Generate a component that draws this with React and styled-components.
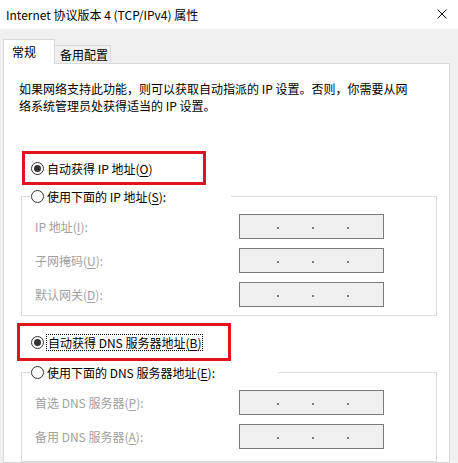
import React from "react";
import styled, { createGlobalStyle } from "styled-components";

const Global = createGlobalStyle`
  html, body { margin: 0; padding: 0; background: #f0f0f0; }
  body {
    width: 458px; height: 463px; overflow: hidden;
    font-family: "Noto Sans CJK SC", "Noto Sans", sans-serif;
    font-size: 12px; color: #000;
  }
  * { box-sizing: border-box; }
`;

const Window = styled.div`
  width: 458px;
  height: 463px;
  display: flex;
  flex-direction: column;
  background: #f0f0f0;
  overflow: hidden;
`;

const TitleBar = styled.div`
  height: 29px;
  flex: none;
  background: #fff;
  display: flex;
  align-items: center;
  justify-content: space-between;
  padding: 0 11px 1px 6px;
  font-size: 12px;
  line-height: 17px;
  color: #000;
`;

const Body = styled.div`
  flex: 1;
  display: flex;
  flex-direction: column;
  padding: 10px 0 0 3px;
`;

const TabRow = styled.div`
  display: flex;
  align-items: flex-end;
`;

const Tab = styled.div`
  position: relative;
  line-height: 17px;
  border: 1px solid #d9d9d9;
  border-bottom: none;
  white-space: nowrap;
  ${(p) =>
    p.$active
      ? `
    z-index: 1;
    width: 52px;
    height: 25px;
    margin-bottom: -1px;
    padding: 3px 0 0 8px;
    background: #fff;
  `
      : `
    width: 57px;
    height: 18px;
    margin-left: -1px;
    padding: 0 0 0 5px;
    background: #f0f0f0;
  `}
`;

const Panel = styled.div`
  width: 447px;
  flex: 1;
  background: #fff;
  border: 1px solid #d9d9d9;
  display: flex;
  flex-direction: column;
  align-items: flex-start;
  padding-top: 16px;
`;

const Description = styled.p`
  margin: 0 0 0 15px;
  line-height: 17px;
  color: #000;
`;

const Highlight = styled.div`
  margin-left: ${(p) => p.$ml}px;
  margin-top: ${(p) => p.$mt}px;
  width: ${(p) => p.$w}px;
  height: ${(p) => p.$h}px;
  border: 3px solid #e0141c;
  display: flex;
  align-items: center;
  padding-left: ${(p) => 31 - p.$ml - 4 - 3}px;
`;

const RadioLabel = styled.span`
  display: inline-flex;
  align-items: center;
  line-height: 17px;
  white-space: nowrap;
  color: #000;
`;

const RadioCircle = styled.span`
  width: 13px;
  height: 13px;
  flex: none;
  border-radius: 50%;
  border: 1px solid #333;
  background: #fff;
  margin-right: 3px;
  display: flex;
  align-items: center;
  justify-content: center;
  &::after {
    content: "";
    display: ${(p) => (p.$checked ? "block" : "none")};
    width: 7px;
    height: 7px;
    border-radius: 50%;
    background: #333;
  }
`;

const Focus = styled.span`
  outline: 1px dotted #000;
  outline-offset: 0;
  padding: 0 1px 0 1px;
  line-height: 15px;
`;

const Group = styled.fieldset`
  margin: 3px 0 0 17px;
  width: 416px;
  min-width: 0;
  border: 1px solid #dcdcdc;
  padding: 9px 0 ${(p) => p.$pb}px 0;
`;

const Legend = styled.legend`
  margin-left: 8px;
  padding: 0 0 0 1px;
  width: ${(p) => p.$w}px;
  height: 17px;
  line-height: 17px;
  background: #fff;
  display: flex;
  align-items: center;
`;

const Rows = styled.div`
  display: grid;
  grid-template-columns: 204px 145px;
  grid-auto-rows: 25px;
  row-gap: 9px;
  padding-left: 13px;
`;

const FieldLabel = styled.span`
  display: flex;
  align-items: center;
  color: #a0a0a0;
  line-height: 17px;
  white-space: nowrap;
`;

const IpBox = styled.div`
  border: 1px solid #7a7a7a;
  background: #f0f0f0;
  display: flex;
  align-items: center;
  gap: 33px;
  padding: 3px 0 0 37px;
`;

const Dot = styled.span`
  width: 2px;
  height: 2px;
  background: #7d7d7d;
  flex: none;
`;

const U = styled.span`
  text-decoration: underline;
  text-underline-offset: 2px;
`;

function Radio({ checked, children }) {
  return (
    <RadioLabel>
      <RadioCircle $checked={checked} />
      {children}
    </RadioLabel>
  );
}

function Ip() {
  return (
    <IpBox>
      <Dot />
      <Dot />
      <Dot />
    </IpBox>
  );
}

function Field({ label }) {
  return (
    <>
      <FieldLabel>{label}</FieldLabel>
      <Ip />
    </>
  );
}

export default function App() {
  return (
    <Window>
      <Global />
      <TitleBar>
        <span>Internet 协议版本 4 (TCP/IPv4) 属性</span>
        <svg width="10" height="10" viewBox="0 0 10 10">
          <path d="M0.5 0.5 L9.5 9.5 M9.5 0.5 L0.5 9.5" stroke="#111" strokeWidth="1" fill="none" />
        </svg>
      </TitleBar>
      <Body>
        <TabRow>
          <Tab $active>常规</Tab>
          <Tab>备用配置</Tab>
        </TabRow>
        <Panel>
          <Description>
            如果网络支持此功能，则可以获取自动指派的 IP 设置。否则，你需要从网
            <br />
            络系统管理员处获得适当的 IP 设置。
          </Description>

          <Highlight $ml={18} $mt={37} $w={184} $h={34}>
            <Radio checked>
              自动获得 IP 地址(<U>O</U>)
            </Radio>
          </Highlight>

          <Group $pb={8}>
            <Legend $w={201}>
              <Radio>
                使用下面的 IP 地址(<U>S</U>):
              </Radio>
            </Legend>
            <Rows>
              <Field label={<>IP 地址(<U>I</U>):</>} />
              <Field label={<>子网掩码(<U>U</U>):</>} />
              <Field label={<>默认网关(<U>D</U>):</>} />
            </Rows>
          </Group>

          <Highlight $ml={13} $mt={7} $w={214} $h={38}>
            <Radio checked>
              <Focus>
                自动获得 DNS 服务器地址(<U>B</U>)
              </Focus>
            </Radio>
          </Highlight>

          <Group $pb={12}>
            <Legend $w={248}>
              <Radio>
                使用下面的 DNS 服务器地址(<U>E</U>):
              </Radio>
            </Legend>
            <Rows>
              <Field label={<>首选 DNS 服务器(<U>P</U>):</>} />
              <Field label={<>备用 DNS 服务器(<U>A</U>):</>} />
            </Rows>
          </Group>
        </Panel>
      </Body>
    </Window>
  );
}
